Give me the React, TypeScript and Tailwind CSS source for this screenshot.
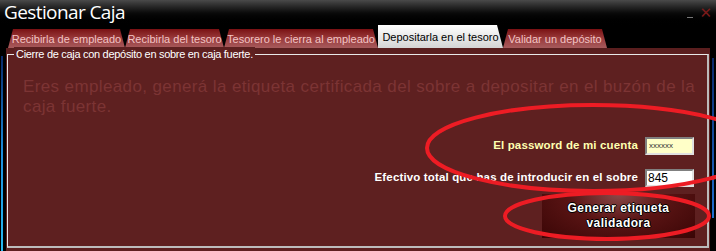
import React from 'react'

const tabs = [
  { label: 'Recibirla de empleado', w: 117 },
  { label: 'Recibirla del tesoro', w: 99 },
  { label: 'Tesorero le cierra al empleado', w: 154 },
  { label: 'Depositarla en el tesoro', w: 125, active: true },
  { label: 'Validar un depósito', w: 104 },
]

function Tab({ label, w, active }: { label: string; w: number; active?: boolean }) {
  if (active) {
    return (
      <div
        style={{ width: w }}
        className="h-[23px] z-10 flex items-center justify-center whitespace-nowrap pt-[2px] bg-gradient-to-b from-[#ffffff] to-[#d4d4d4] text-black text-[11px] [clip-path:polygon(0_0,calc(100%-6px)_0,100%_100%,0_100%)]"
      >
        {label}
      </div>
    )
  }
  return (
    <div
      style={{ width: w }}
      className="h-[19px] flex items-center justify-center whitespace-nowrap pt-[2px] bg-gradient-to-b from-[#7a0f12] via-[#9a3a3c] to-[#a65a5c] text-[#f2c4c4] text-[11px] [clip-path:polygon(5px_0,calc(100%-5px)_0,100%_100%,0_100%)]"
    >
      {label}
    </div>
  )
}

export default function App() {
  return (
    <div className="relative w-[716px] h-[251px] bg-black overflow-hidden font-['Liberation_Sans',Arial,sans-serif]">
      {/* title bar */}
      <div className="h-[26px] flex items-start justify-between bg-gradient-to-b from-[#4a4a4a] via-[#0a0a0a] to-black">
        <div className="pl-[4px] text-white text-[19px] leading-[24px] font-medium tracking-[-0.6px] font-['Open_Sans',sans-serif]">
          Gestionar Caja
        </div>
        <div className="flex items-end gap-[6px] pr-[4px] pt-[6px]">
          <span className="w-[6px] h-[1px] bg-[#777] mb-[2px]" />
          <span className="text-[#7a1a1a] text-[15px] leading-[14px] font-['DejaVu_Sans',sans-serif]">✕</span>
        </div>
      </div>

      {/* tabs */}
      <div className="h-[22px] flex items-end pl-[8px]">
        {tabs.map((t) => (
          <Tab key={t.label} {...t} />
        ))}
      </div>

      {/* body */}
      <div className="flex h-[203px]">
        <div className="w-[6px] flex justify-start pl-[1px] pt-[8px]">
          <div className="w-[2px] h-full bg-gradient-to-b from-[#0a2a6a] via-[#1e8fe0] to-[#28b8f0]" />
        </div>
        <div className="w-[704px] flex flex-col bg-[#5e2020]">
          <div className="h-[5px] bg-[#5a1e1e]" />
          <div className="relative flex-1 mx-[1px] mb-[3px] mt-[1px] border-t border-l border-[#e8e8e8] border-r-2 border-b-2 border-r-[#bcbcbc] border-b-[#bcbcbc]">
            <div className="absolute -top-[8px] left-[6px] px-[2px] bg-[#5e2020] text-white text-[11px] leading-[14px] tracking-[-0.3px] whitespace-nowrap">
              Cierre de caja con depósito en sobre en caja fuerte.
            </div>
            <p className="pl-[15px] pr-[2px] pt-[22px] text-[#7c3434] text-[17px] leading-[20px] tracking-[0.38px]">
              Eres empleado, generá la etiqueta certificada del sobre a depositar en el buzón de la caja fuerte.
            </p>
            <div className="flex flex-col items-end pr-[13px] pt-[20px] gap-[14px]">
              <div className="flex items-center gap-[7px]">
                <span className="text-[#ffffb0] text-[11.5px] font-bold tracking-[0.15px]">El password de mi cuenta</span>
                <div className="w-[49px] h-[18px] bg-[#ffffc8] border-2 border-t-[#808080] border-l-[#808080] border-r-[#e0e0e0] border-b-[#e0e0e0] text-[8px] leading-[13px] pl-[2px] text-[#333]">
                  xxxxxx
                </div>
              </div>
              <div className="flex items-center gap-[7px]">
                <span className="text-white text-[11.5px] font-bold tracking-[0.15px]">Efectivo total que has de introducir en el sobre</span>
                <div className="w-[49px] h-[18px] bg-white border-2 border-t-[#808080] border-l-[#808080] border-r-[#e0e0e0] border-b-[#e0e0e0] text-[12px] leading-[14px] pl-[1px] text-black">
                  845
                </div>
              </div>
            </div>
            <div className="flex justify-end pr-[12px] pt-[7px]">
              <button className="w-[153px] h-[44px] flex items-center justify-center text-center bg-[radial-gradient(ellipse_at_50%_0%,#8a4a4a_0%,#5a1414_45%,#3a0606_100%)] text-white font-bold text-[12px] leading-[15px] tracking-[0.4px] [text-shadow:1px_0_0_#000,-1px_0_0_#000,0_1px_0_#000,0_-1px_0_#000]">
                Generar etiqueta
                <br />
                validadora
              </button>
            </div>
          </div>
        </div>
        <div className="w-[6px] flex justify-end pr-[2px] pt-[10px]">
          <div className="w-[2px] h-[160px] bg-gradient-to-b from-[#0a2a6a] to-[#1e6fd0]" />
        </div>
      </div>

      {/* red annotation ellipses */}
      <svg className="absolute inset-0 pointer-events-none" width="716" height="251">
        <ellipse cx="593" cy="148" rx="166" ry="43" fill="none" stroke="#ed1c24" strokeWidth="4" />
        <ellipse cx="607" cy="216" rx="102" ry="23" fill="none" stroke="#ed1c24" strokeWidth="4" />
      </svg>
    </div>
  )
}
